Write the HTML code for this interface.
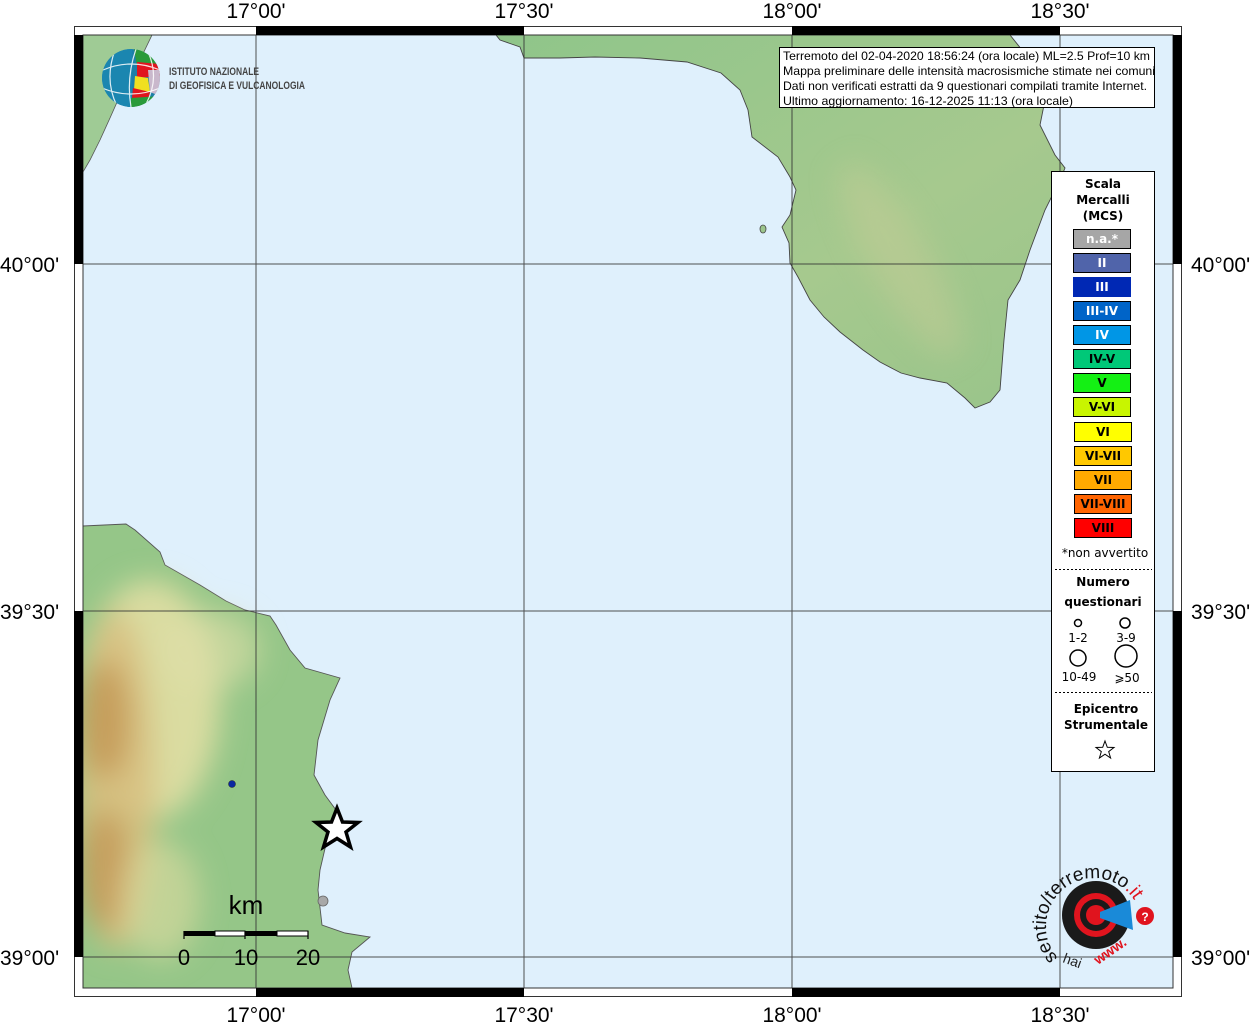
<!DOCTYPE html>
<html><head><meta charset="utf-8"><style>
html,body{margin:0;padding:0;background:#fff;width:1255px;height:1024px;overflow:hidden}
svg{display:block}
</style></head><body>
<svg width="1255" height="1024" viewBox="0 0 1255 1024" xmlns="http://www.w3.org/2000/svg" font-family="Liberation Sans, sans-serif">
<defs>
<clipPath id="mapc"><rect x="83" y="35" width="1090" height="953"/></clipPath>
<clipPath id="globe"><circle cx="131" cy="78" r="29"/></clipPath>
<filter id="bl" x="-50%" y="-50%" width="200%" height="200%"><feGaussianBlur stdDeviation="14"/></filter>
<linearGradient id="sal" x1="0" y1="0" x2="1" y2="1">
<stop offset="0" stop-color="#8fc58a"/><stop offset="0.6" stop-color="#a6c98e"/><stop offset="1" stop-color="#98c48a"/></linearGradient>
</defs>
<rect x="83" y="35" width="1090" height="953" fill="#dff0fc"/>
<g clip-path="url(#mapc)">
<path d="M83,35 L152,35 L140,60 L118,100 L110,118 L100,140 L90,160 L83,172 Z" fill="#9fcb95" stroke="#555" stroke-width="0.8"/>
<path d="M496,35 L1010,35 L1030,60 L1045,100 L1040,125 L1055,155 L1065,168 L1060,180 L1045,210 L1030,250 L1020,280 L1008,300 L1004,340 L1000,390 L990,402 L975,408 L965,398 L947,383 L920,378 L901,373 L880,362 L863,350 L840,332 L824,317 L810,300 L798,277 L790,263 L789,243 L782,227 L790,215 L796,190 L790,177 L778,157 L752,137 L748,110 L740,90 L721,73 L687,62 L640,58 L595,57 L560,58 L524,58 L520,47 L500,40 Z" fill="url(#sal)" stroke="#444" stroke-width="0.9"/>
<ellipse cx="900" cy="260" rx="30" ry="110" fill="#c4cc96" opacity="0.5" filter="url(#bl)" transform="rotate(-30 900 260)"/>
<ellipse cx="763" cy="229" rx="3" ry="4" fill="#9cc58c" stroke="#444" stroke-width="0.8"/>
<path d="M83,526 L126,524 L135,530 L160,552 L165,565 L200,585 L226,601 L245,610 L270,616 L276,625 L290,650 L305,668 L340,678 L330,700 L318,740 L314,775 L325,795 L336,810 L327,840 L320,870 L318,890 L322,925 L345,933 L370,937 L352,952 L348,970 L352,988 L83,988 Z" fill="#95c688" stroke="#555" stroke-width="0.9"/>
<g filter="url(#bl)">
<ellipse cx="150" cy="700" rx="70" ry="120" fill="#e6e0a6" opacity="0.85"/>
<ellipse cx="210" cy="650" rx="50" ry="40" fill="#e0e0a8" opacity="0.6"/>
<ellipse cx="115" cy="780" rx="40" ry="170" fill="#d8c080" opacity="0.9"/>
<ellipse cx="105" cy="720" rx="25" ry="60" fill="#c49a58" opacity="0.9"/>
<ellipse cx="105" cy="870" rx="25" ry="60" fill="#c49a58" opacity="0.85"/>
<ellipse cx="160" cy="900" rx="40" ry="60" fill="#e0dca0" opacity="0.6"/>
</g>
</g>
<g stroke="#333" stroke-width="1" opacity="0.85">
<line x1="256" y1="35" x2="256" y2="988"/><line x1="524" y1="35" x2="524" y2="988"/>
<line x1="792" y1="35" x2="792" y2="988"/><line x1="1060" y1="35" x2="1060" y2="988"/>
<line x1="83" y1="264" x2="1173" y2="264"/><line x1="83" y1="611" x2="1173" y2="611"/><line x1="83" y1="957" x2="1173" y2="957"/>
</g>
<rect x="74.5" y="26.5" width="1107" height="970" fill="none" stroke="#333" stroke-width="1"/>
<rect x="83" y="35" width="1090" height="953" fill="none" stroke="#333" stroke-width="1"/>
<g fill="#000">
<rect x="256" y="26" width="268" height="9"/><rect x="792" y="26" width="268" height="9"/>
<rect x="256" y="988" width="268" height="9"/><rect x="792" y="988" width="268" height="9"/>
<rect x="74" y="35" width="9" height="229"/><rect x="74" y="611" width="9" height="346"/>
<rect x="1173" y="35" width="9" height="229"/><rect x="1173" y="611" width="9" height="346"/>
</g>
<g font-size="21" fill="#000" text-anchor="middle">
<text x="256" y="18">17°00'</text><text x="524" y="18">17°30'</text><text x="792" y="18">18°00'</text><text x="1060" y="18">18°30'</text>
<text x="256" y="1022">17°00'</text><text x="524" y="1022">17°30'</text><text x="792" y="1022">18°00'</text><text x="1060" y="1022">18°30'</text>
</g>
<g font-size="21" fill="#000">
<text x="0" y="272">40°00'</text><text x="0" y="619">39°30'</text><text x="0" y="965">39°00'</text>
<text x="1191" y="272">40°00'</text><text x="1191" y="619">39°30'</text><text x="1191" y="965">39°00'</text>
</g>
<!-- INGV logo -->
<g clip-path="url(#globe)">
<circle cx="131" cy="78" r="29" fill="#1c7fa8"/>
<rect x="102" y="49" width="30" height="58" fill="#1b86b0"/>
<path d="M134,49 L160,49 L160,66 L138,72 Z" fill="#2a9a3a"/>
<path d="M137,62 L160,64 L160,76 L137,78 Z" fill="#e0141e"/>
<path d="M135,76 L148,78 L150,92 L134,90 Z" fill="#f0e020"/>
<path d="M148,70 L160,70 L160,96 L150,92 Z" fill="#c9b8cc"/>
<path d="M133,88 L150,92 L148,100 L132,98 Z" fill="#e0141e"/>
<path d="M131,98 L160,96 L160,107 L131,107 Z" fill="#2a9a3a"/>
<path d="M103,70 Q131,58 160,70 M102,88 Q131,100 160,88 M115,50 Q104,80 117,106 M136,49 Q126,78 131,107 M148,52 Q160,78 146,104" stroke="#fff" stroke-width="1.2" fill="none" opacity="0.85"/>
</g>
<text x="169" y="75" font-size="11" font-weight="bold" fill="#444" textLength="90" lengthAdjust="spacingAndGlyphs">ISTITUTO NAZIONALE</text>
<text x="169" y="89" font-size="11" font-weight="bold" fill="#444" textLength="136" lengthAdjust="spacingAndGlyphs">DI GEOFISICA E VULCANOLOGIA</text>
<rect x="779.5" y="47.5" width="375" height="60" fill="#fff" stroke="#000" stroke-width="1"/>
<g font-size="12" fill="#000">
<text x="783" y="60" textLength="367" lengthAdjust="spacingAndGlyphs">Terremoto del 02-04-2020 18:56:24 (ora locale) ML=2.5 Prof=10 km</text>
<text x="783" y="75" textLength="372" lengthAdjust="spacingAndGlyphs">Mappa preliminare delle intensità macrosismiche stimate nei comuni</text>
<text x="783" y="90" textLength="364" lengthAdjust="spacingAndGlyphs">Dati non verificati estratti da 9 questionari compilati tramite Internet.</text>
<text x="783" y="105" textLength="290" lengthAdjust="spacingAndGlyphs">Ultimo aggiornamento: 16-12-2025 11:13 (ora locale)</text>
</g>
<rect x="1051.5" y="171.5" width="103" height="600" fill="#fff" stroke="#000" stroke-width="1"/>
<g font-family="DejaVu Sans, sans-serif" font-weight="bold" font-size="12" text-anchor="middle" fill="#000">
<text x="1103" y="188">Scala</text><text x="1103" y="204">Mercalli</text><text x="1103" y="220">(MCS)</text>
</g>
<g font-family="DejaVu Sans, sans-serif" font-weight="bold" font-size="12" text-anchor="middle" stroke="#000" stroke-width="1">
<rect x="1073.5" y="229.5" width="57" height="19" fill="#a6a6a6"/>
<rect x="1073.5" y="253.5" width="57" height="19" fill="#5064aa"/>
<rect x="1073" y="277" width="58" height="20" fill="#0028b4" stroke="none"/>
<rect x="1073.5" y="301.5" width="57" height="19" fill="#0064c8"/>
<rect x="1073.5" y="325.5" width="57" height="19" fill="#0096e6"/>
<rect x="1073.5" y="349.5" width="57" height="19" fill="#00c878"/>
<rect x="1073.5" y="373.5" width="57" height="19" fill="#14f014"/>
<rect x="1073.5" y="397.5" width="57" height="19" fill="#c8f500"/>
<rect x="1074.5" y="422.5" width="57" height="19" fill="#ffff00"/>
<rect x="1074.5" y="446.5" width="57" height="19" fill="#ffc800"/>
<rect x="1074.5" y="470.5" width="57" height="19" fill="#ffaa00"/>
<rect x="1074.5" y="494.5" width="57" height="19" fill="#ff6400"/>
<rect x="1074.5" y="518.5" width="57" height="19" fill="#ff0000"/>
<g stroke="none" fill="#fff">
<text x="1102" y="243">n.a.*</text><text x="1102" y="267">II</text><text x="1102" y="291">III</text><text x="1102" y="315">III-IV</text><text x="1102" y="339">IV</text>
</g>
<g stroke="none" fill="#000">
<text x="1102" y="363">IV-V</text><text x="1102" y="387">V</text><text x="1102" y="411">V-VI</text><text x="1103" y="436">VI</text><text x="1103" y="460">VI-VII</text><text x="1103" y="484">VII</text><text x="1103" y="508">VII-VIII</text><text x="1103" y="532">VIII</text>
</g>
</g>
<g font-family="DejaVu Sans, sans-serif" font-size="12" text-anchor="middle" fill="#000">
<text x="1105" y="557">*non avvertito</text>
<line x1="1055" y1="569.5" x2="1152" y2="569.5" stroke="#000" stroke-dasharray="2,2"/>
<text x="1103" y="586" font-weight="bold">Numero</text><text x="1103" y="606" font-weight="bold">questionari</text>
<circle cx="1078" cy="623" r="3.5" fill="none" stroke="#000" stroke-width="1.5"/>
<circle cx="1125" cy="623" r="5" fill="none" stroke="#000" stroke-width="1.5"/>
<text x="1078" y="642">1-2</text><text x="1126" y="642">3-9</text>
<circle cx="1078" cy="658" r="8" fill="none" stroke="#000" stroke-width="1.5"/>
<circle cx="1126" cy="656" r="11" fill="none" stroke="#000" stroke-width="1.5"/>
<text x="1079" y="681">10-49</text><text x="1127" y="682">⩾50</text>
<line x1="1055" y1="692.5" x2="1152" y2="692.5" stroke="#000" stroke-dasharray="2,2"/>
<text x="1106" y="713" font-weight="bold">Epicentro</text><text x="1106" y="729" font-weight="bold">Strumentale</text>
<path d="M1105,741 L1107.3,747.3 L1114,747.5 L1108.7,751.6 L1110.6,758 L1105,754.2 L1099.4,758 L1101.3,751.6 L1096,747.5 L1102.7,747.3 Z" fill="#fff" stroke="#000" stroke-width="1"/>
</g>
<circle cx="232" cy="784" r="3.5" fill="#0a28a0" stroke="#222" stroke-width="0.5"/>
<circle cx="323" cy="901" r="5" fill="#a8a8a8" stroke="#666" stroke-width="0.8"/>
<path d="M337,808 L342.5,822 L358,822.5 L346,832 L350.5,847 L337,838.5 L323.5,847 L328,832 L316,822.5 L331.5,822 Z" fill="#fff" stroke="#000" stroke-width="3.5"/>
<text x="246" y="914" font-size="26" text-anchor="middle" fill="#000">km</text>
<rect x="184" y="931" width="31" height="5" fill="#000"/><rect x="215" y="931" width="30" height="5" fill="#fff" stroke="#000" stroke-width="1"/>
<rect x="245" y="931" width="32" height="5" fill="#000"/><rect x="277" y="931" width="31" height="5" fill="#fff" stroke="#000" stroke-width="1"/>
<path d="M184,931 V939 M245,931 V939 M308,931 V939" stroke="#000" stroke-width="1.2"/>
<g font-size="22" text-anchor="middle" fill="#000"><text x="184" y="965">0</text><text x="246" y="965">10</text><text x="308" y="965">20</text></g>
<g>
<defs><path id="arc" d="M1058,958 A48,48 0 1 1 1140,940"/></defs>
<circle cx="1096" cy="915" r="34" fill="#1a1a1a"/>
<circle cx="1096" cy="915" r="22" fill="#e0141e"/>
<circle cx="1096" cy="915" r="16" fill="#1a1a1a"/>
<circle cx="1096" cy="915" r="10" fill="#e0141e"/>
<path d="M1100,912 L1130,900 L1133,930 L1100,918 Z" fill="#1a8ad8"/>
<circle cx="1145" cy="916" r="9" fill="#e0141e"/>
<text x="1145" y="921" font-size="12" font-weight="bold" fill="#fff" text-anchor="middle">?</text>
<text font-size="19" fill="#111"><textPath href="#arc">sentito/terremoto<tspan fill="#e0141e">.it</tspan></textPath></text>
<text x="1098" y="965" font-size="14" fill="#e0141e" font-weight="bold" transform="rotate(-35 1098 965)">www.</text>
<text x="1062" y="962" font-size="14" fill="#222" transform="rotate(20 1062 962)">hai</text>
</g>
</svg>
</body></html>
